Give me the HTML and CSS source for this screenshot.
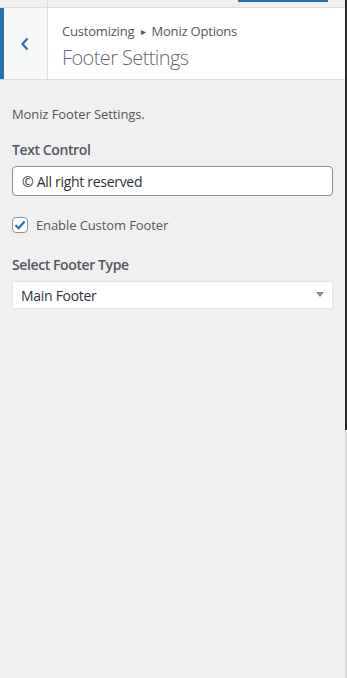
FILE: index.html
```html
<!DOCTYPE html>
<html>
<head>
  <title>Footer Settings</title>
  <link rel="stylesheet" href="styles.css">
</head>
<body>
  <div class="frame">
    <div class="panel">
      <div class="topbar">
        <div class="topbar-side"></div>
        <div class="topbar-main">
          <span class="publish-edge"></span>
        </div>
      </div>

      <div class="section-header">
        <button class="back-btn" aria-label="Back">
          <svg width="10" height="16" viewBox="0 0 10 16">
            <polyline points="7.5,2.5 2.5,8 7.5,13.5" fill="none" stroke="#2271b1" stroke-width="2.2"/>
          </svg>
        </button>
        <div class="section-title">
          <div class="crumbs">Customizing <span class="crumb-sep">&#9656;</span> Moniz Options</div>
          <h3 class="title">Footer Settings</h3>
        </div>
      </div>

      <div class="controls">
        <p class="description">Moniz Footer Settings.</p>

        <div class="control">
          <label class="control-label" for="footer-text">Text Control</label>
          <input type="text" id="footer-text" class="text-input" value="© All right reserved">
        </div>

        <label class="check-row">
          <span class="checkbox">
            <svg width="12" height="10" viewBox="0 0 12 10">
              <polyline points="1.5,5.2 4.6,8.2 10.6,1.5" fill="none" stroke="#2271b1" stroke-width="2.2"/>
            </svg>
          </span>
          <span class="check-label">Enable Custom Footer</span>
        </label>

        <div class="control">
          <span class="control-label">Select Footer Type</span>
          <div class="select">
            <span>Main Footer</span>
            <span class="select-arrow"></span>
          </div>
        </div>
      </div>
    </div>

    <div class="edge">
      <div class="edge-dark"></div>
      <div class="edge-light"></div>
    </div>
  </div>
</body>
</html>
```

FILE: styles.css
```css
:root {
  --blue: #2271b1;
  --text: #50575e;
  --text-dark: #2c3338;
  --bg: #f0f0f1;
  --border: #dcdcde;
}

* {
  margin: 0;
  padding: 0;
  box-sizing: border-box;
}

body {
  width: 347px;
  height: 678px;
  font-family: 'Open Sans', 'Noto Sans', sans-serif;
  color: var(--text);
  background-color: var(--bg);
  overflow: hidden;
}

.frame {
  display: flex;
  height: 678px;
}

.panel {
  flex: 1;
}

.topbar {
  display: flex;
  height: 8px;
  border-bottom: 1px solid var(--border);
}

.topbar-side {
  width: 48px;
  border-right: 1px solid var(--border);
}

.topbar-main {
  flex: 1;
  padding-left: 190px;
}

.publish-edge {
  display: block;
  width: 90px;
  height: 2px;
  background-color: var(--blue);
}

.section-header {
  display: flex;
  height: 72px;
  background-color: #fff;
  border-bottom: 1px solid var(--border);
}

.back-btn {
  width: 48px;
  display: flex;
  align-items: center;
  justify-content: center;
  padding-right: 2px;
  background-color: #f6f7f7;
  border: none;
  border-left: 4px solid var(--blue);
  border-right: 1px solid var(--border);
}

.section-title {
  padding: 13px 0 0 14px;
}

.crumbs {
  font-size: 13px;
  line-height: 20px;
  letter-spacing: -0.2px;
  color: var(--text);
}

.crumb-sep {
  font-size: 10px;
  margin: 0 3px;
  position: relative;
  top: -1px;
}

.title {
  font-size: 20px;
  font-weight: 300;
  line-height: 28px;
  letter-spacing: -0.6px;
  margin-top: 2px;
  color: #646970;
}

.controls {
  padding: 24px 12px 0 12px;
}

.description {
  font-size: 13px;
  line-height: 20px;
  letter-spacing: -0.1px;
  margin-bottom: 16px;
}

.control {
  margin-bottom: 16px;
}

.control-label {
  display: block;
  font-size: 14px;
  font-weight: 600;
  line-height: 20px;
  letter-spacing: -0.4px;
  margin-bottom: 6px;
}

.text-input {
  display: block;
  width: 100%;
  height: 30px;
  padding: 0 9px;
  font-family: inherit;
  font-size: 14px;
  letter-spacing: -0.3px;
  color: var(--text-dark);
  background-color: #fff;
  border: 1px solid #8c8f94;
  border-radius: 4px;
}

.check-row {
  display: flex;
  align-items: center;
  gap: 8px;
  margin-top: 20px;
  margin-bottom: 21px;
}

.checkbox {
  width: 16px;
  height: 16px;
  display: flex;
  align-items: center;
  justify-content: center;
  background-color: #fff;
  border: 1px solid #8c8f94;
  border-radius: 4px;
}

.check-label {
  font-size: 13px;
  line-height: 18px;
  letter-spacing: -0.1px;
}

.select {
  display: flex;
  align-items: center;
  justify-content: space-between;
  height: 28px;
  padding: 0 8px 0 8px;
  font-size: 14px;
  letter-spacing: -0.3px;
  color: var(--text-dark);
  background-color: #fff;
  border: 1px solid #e4e4e4;
}

.select-arrow {
  width: 0;
  height: 0;
  border-left: 4px solid transparent;
  border-right: 4px solid transparent;
  border-top: 5px solid #888;
  margin-top: -2px;
}

.edge {
  width: 2px;
  display: flex;
  flex-direction: column;
}

.edge-dark {
  height: 430px;
  background-color: #2c2a28;
}

.edge-light {
  flex: 1;
  background-color: #dcdcde;
}
```
